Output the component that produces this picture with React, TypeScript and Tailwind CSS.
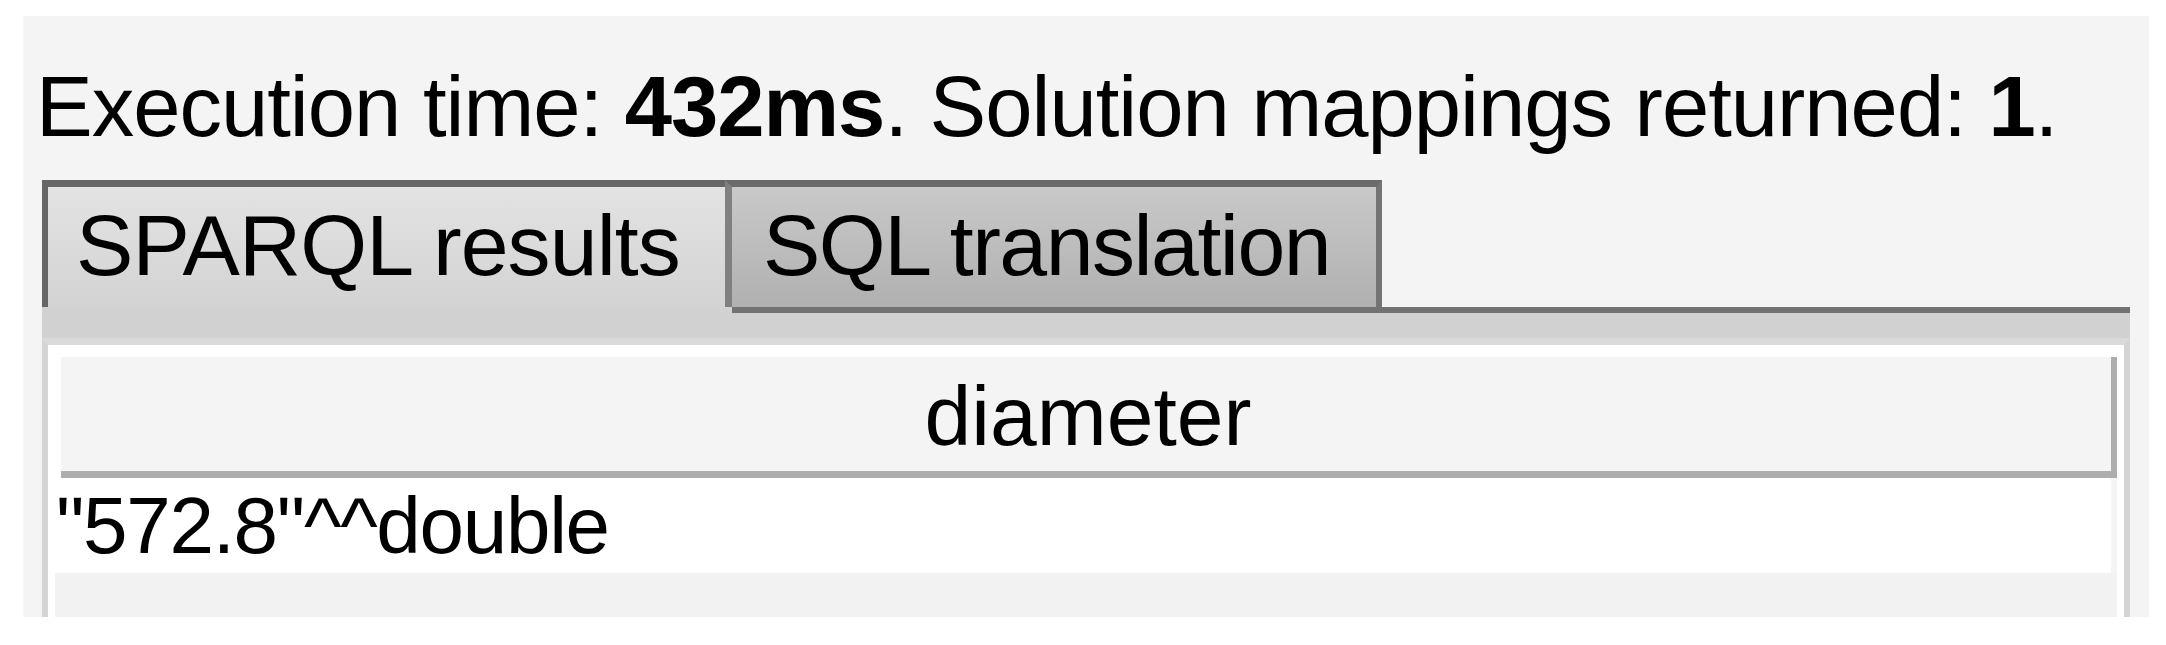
import React from "react";

export default function App() {
  const font = { fontFamily: '"Liberation Sans", Arial, sans-serif' };
  return (
    <div className="w-[2166px] h-[645px] bg-white overflow-hidden" style={font}>
      <div className="mt-[16px] ml-[23px] w-[2126px] h-[601px] bg-[#f4f4f4] pt-[41px] px-[19px] overflow-hidden">
        <p className="-ml-[6px] text-[85px] leading-[100px] h-[100px] tracking-[-1px] text-black whitespace-nowrap">
          Execution time: <b>432ms</b>. Solution mappings returned: <b>1</b>.
        </p>
        <div className="mt-[23px]">
          <div className="flex h-[127px]">
            <div className="w-[683px] h-[127px] border-t-[7px] border-l-[6px] border-[#666666] bg-linear-to-b from-[#e3e3e3] to-[#d3d3d3] pl-[28px] text-[86px] leading-[116px] tracking-[-0.9px] whitespace-nowrap text-black">
              SPARQL results
            </div>
            <div className="w-[657px] h-[127px] border-t-[7px] border-t-[#6b6b6b] border-l-[7px] border-l-[#808080] border-r-[6px] border-r-[#747474] bg-linear-to-b from-[#c9c9c9] to-[#b0b0b0] pl-[31px] text-[86px] leading-[116px] tracking-[-1.5px] whitespace-nowrap text-black">
              SQL translation
            </div>
            <div className="flex-1" />
          </div>
          <div className="flex h-[6px]">
            <div className="w-[690px] bg-[#d2d2d2]" />
            <div className="flex-1 bg-[#727272]" />
          </div>
          <div className="h-[25px] bg-[#d1d1d1]" />
          <div className="border-x-[6px] border-x-[#d4d4d4] border-t-[7px] border-t-[#dadada] bg-white h-[279px]">
            <div className="pt-[6px]">
              <div className="ml-[13px] mr-[7px] border-r-[6px] border-b-[7px] border-[#adadad]">
                <div className="mt-[6px] h-[114px] bg-[#f4f4f4] pt-[5px] pl-[4px] text-center text-[84px] leading-[109px] text-black">
                  diameter
                </div>
              </div>
              <div className="mr-[7px] border-r-[6px] border-r-[#f4f4f4] h-[95px] pl-[8px] text-[80px] leading-[95px] tracking-[-1.3px] text-black whitespace-nowrap">
                "572.8"^^double
              </div>
              <div className="ml-[7px] mr-[7px] h-[44px] bg-[#f2f2f2]" />
            </div>
          </div>
        </div>
      </div>
    </div>
  );
}
